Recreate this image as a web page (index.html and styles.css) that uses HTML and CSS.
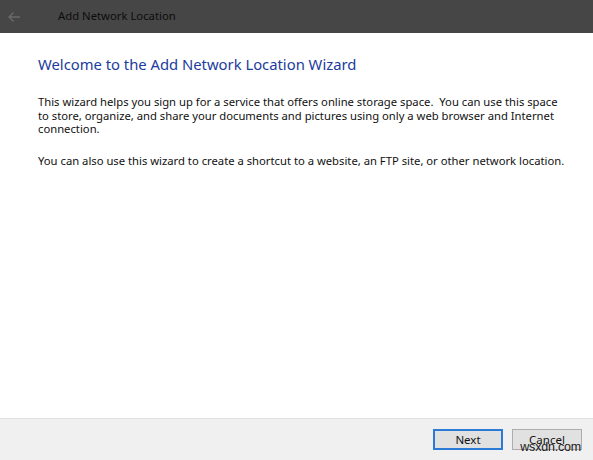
FILE: index.html
```html
<!DOCTYPE html>
<html>
<head>
<meta charset="utf-8">
<link rel="stylesheet" href="styles.css">
</head>
<body>
<div class="window">
  <header class="titlebar">
    <svg class="back" width="14" height="12" viewBox="0 0 14 12"><path d="M13 6H2M6.5 1.5L2 6l4.5 4.5" fill="none" stroke="#6a6a6a" stroke-width="1.3"/></svg>
    <span class="title">Add Network Location</span>
  </header>
  <main class="content">
    <h1 class="heading">Welcome to the Add Network Location Wizard</h1>
    <p class="para">This wizard helps you sign up for a service that offers online storage space.&nbsp; You can use this space<br>to store, organize, and share your documents and pictures using only a web browser and Internet<br>connection.</p>
    <p class="para second">You can also use this wizard to create a shortcut to a website, an FTP site, or other network location.</p>
  </main>
  <footer class="footer">
    <button class="btn primary">Next</button>
    <button class="btn">Cancel</button>
    <span class="watermark">wsxdn.com</span>
  </footer>
</div>
</body>
</html>
```
FILE: styles.css
```css
html, body {
  margin: 0;
  padding: 0;
  background: #ffffff;
}
.window {
  width: 593px;
  height: 460px;
  display: flex;
  flex-direction: column;
  font-family: "Noto Sans", "Open Sans", sans-serif;
  position: relative;
  overflow: hidden;
}
.titlebar {
  height: 33px;
  background: #474646;
  display: flex;
  align-items: center;
  flex-shrink: 0;
}
.back {
  margin-left: 7px;
  margin-top: 1px;
}
.title {
  margin-left: 37px;
  font-size: 11.3px;
  color: #0c0c0c;
  margin-top: -3px;
}
.content {
  flex: 1;
  padding: 21px 0 0 38px;
}
.heading {
  margin: 0;
  font-weight: normal;
  font-size: 14.8px;
  color: #1c3c9c;
  line-height: 21px;
}
.para {
  margin: 20px 0 0 0;
  font-size: 11.25px;
  line-height: 13.5px;
  color: #111;
  white-space: nowrap;
}
.para.second {
  margin-top: 18px;
}
.footer {
  background: #f0f0f0;
  border-top: 1px solid #dfdfdf;
  display: flex;
  justify-content: flex-end;
  align-items: flex-start;
  gap: 9px;
  padding: 10px 11px 0 0;
  box-sizing: border-box;
  height: 42px;
  position: relative;
  flex-shrink: 0;
}
.btn {
  width: 70px;
  height: 21px;
  background: #e1e1e1;
  border: 1px solid #adadad;
  font-family: inherit;
  font-size: 11.5px;
  color: #111;
  padding: 0;
  margin: 0;
  line-height: 18px;
}
.btn.primary {
  border: 2px solid #2a7ad6;
}
.watermark {
  position: absolute;
  right: 12px;
  top: 21px;
  font-family: "Liberation Sans", sans-serif;
  font-size: 12.5px;
  color: #1a1a1a;
  letter-spacing: -0.2px;
}
```
